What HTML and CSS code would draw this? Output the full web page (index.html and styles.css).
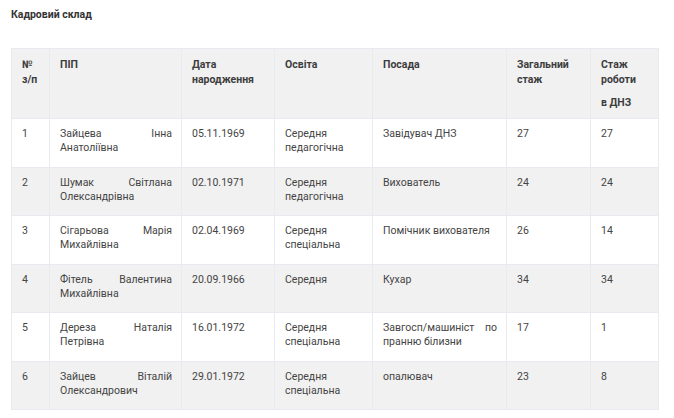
FILE: index.html
```html
<!DOCTYPE html>
<html lang="uk">
<head>
<meta charset="utf-8">
<link rel="stylesheet" href="styles.css">
</head>
<body>
<h2 class="title">Кадровий склад</h2>
<table class="staff">
  <colgroup>
    <col class="c1"><col class="c2"><col class="c3"><col class="c4"><col class="c5"><col class="c6"><col class="c7">
  </colgroup>
  <thead>
    <tr>
      <th>№<br>з/п</th>
      <th>ПІП</th>
      <th>Дата народження</th>
      <th>Освіта</th>
      <th>Посада</th>
      <th>Загальний стаж</th>
      <th><p class="hp">Стаж роботи</p><p class="hp gap">в ДНЗ</p></th>
    </tr>
  </thead>
  <tbody>
    <tr><td>1</td><td class="name">Зайцева Інна Анатоліївна</td><td>05.11.1969</td><td>Середня педагогічна</td><td>Завідувач ДНЗ</td><td>27</td><td>27</td></tr>
    <tr class="alt"><td>2</td><td class="name">Шумак Світлана Олександрівна</td><td>02.10.1971</td><td>Середня педагогічна</td><td>Вихователь</td><td>24</td><td>24</td></tr>
    <tr><td>3</td><td class="name">Сігарьова Марія Михайлівна</td><td>02.04.1969</td><td>Середня спеціальна</td><td>Помічник вихователя</td><td>26</td><td>14</td></tr>
    <tr class="alt"><td>4</td><td class="name">Фітель Валентина Михайлівна</td><td>20.09.1966</td><td>Середня</td><td>Кухар</td><td>34</td><td>34</td></tr>
    <tr><td>5</td><td class="name">Дереза Наталія Петрівна</td><td>16.01.1972</td><td>Середня спеціальна</td><td class="name">Завгосп/машиніст по пранню білизни</td><td>17</td><td>1</td></tr>
    <tr class="alt"><td>6</td><td class="name">Зайцев Віталій Олександрович</td><td>29.01.1972</td><td>Середня спеціальна</td><td>опалювач</td><td>23</td><td>8</td></tr>
  </tbody>
</table>
</body>
</html>
```
FILE: styles.css
```css
html, body {
  margin: 0;
  padding: 0;
  background: #ffffff;
}
body {
  padding: 8px 11px;
  font-family: Roboto, "Liberation Sans", sans-serif;
  font-size: 10.5px;
  line-height: 14px;
  color: #444444;
}
.title {
  margin: 0 0 26px 0;
  font-size: 10.5px;
  line-height: 14px;
  font-weight: 700;
  color: #333333;
}
.staff {
  border-collapse: collapse;
  table-layout: fixed;
  width: 647px;
}
.c1 { width: 38px; }
.c2 { width: 132px; }
.c3 { width: 93px; }
.c4 { width: 98px; }
.c5 { width: 134px; }
.c6 { width: 84px; }
.c7 { width: 68px; }
.staff th, .staff td {
  border: 1px solid #e7ebef;
  vertical-align: top;
  text-align: left;
}
.staff th {
  padding: 8px 9px 8px 10px;
  background: #f1f1f1;
  font-weight: 700;
  color: #3d3d3d;
  line-height: 15px;
  height: 53px;
}
.staff td {
  padding: 8px 9px 11.5px 10px;
  height: 28px;
}
.hp {
  margin: 0;
  line-height: 15px;
}
.hp.gap {
  margin-top: 8px;
}
.staff td.name {
  text-align: justify;
}
.staff tr.alt td {
  background: #f1f1f1;
}
```
